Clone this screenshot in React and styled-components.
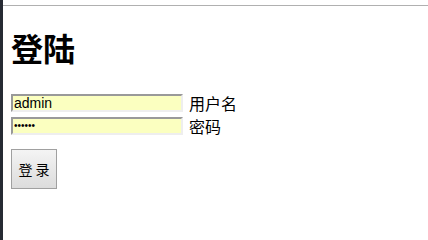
import React from 'react';
import styled, { createGlobalStyle } from 'styled-components';

const Global = createGlobalStyle`
    html, body {
        margin: 0;
        padding: 0;
        background: #fff;
    }
    body {
        font-family: 'Liberation Sans', 'Noto Sans CJK SC', sans-serif;
        color: #000;
    }
`

const Frame = styled.div`
    border-left: 3px solid #262a33;
    height: 100vh;
    box-sizing: border-box;
    overflow: hidden;
`

const Rule = styled.div`
    margin-top: 5px;
    border-top: 1px solid #b0b0b0;
`

const Content = styled.form`
    padding: 0 8px;
    display: flex;
    flex-direction: column;
    align-items: flex-start;
`

const Title = styled.h1`
    font-family: 'Noto Sans CJK SC', sans-serif;
    font-size: 32px;
    font-weight: bold;
    line-height: 37px;
    margin: 23px 0 25px;
`

const Row = styled.label`
    display: flex;
    align-items: center;
    gap: 6px;
    height: 23px;
    font-family: 'Noto Sans CJK SC', sans-serif;
    font-size: 16px;
`

const Field = styled.input`
    box-sizing: border-box;
    width: 172px;
    height: 18px;
    margin: 0;
    padding: 0 1px;
    background: #fbffc0;
    border: 2px solid;
    border-color: #999 #eee #eee #999;
    font-family: 'Liberation Sans', sans-serif;
    font-size: ${p => (p.type === 'password' ? '10px' : '14px')};
    color: #000;
    outline: none;
`

const Button = styled.button`
    margin-top: 12px;
    width: 46px;
    height: 40px;
    padding: 0;
    border: 1px solid #a0a0a0;
    border-radius: 0;
    background: linear-gradient(#f4f4f4, #dcdcdc);
    font-family: 'Noto Sans CJK SC', sans-serif;
    font-size: 14px;
    color: #000;
`

function App() {
    return (
        <Frame>
            <Global />
            <Rule />
            <Content onSubmit={e => e.preventDefault()}>
                <Title>登陆</Title>
                <Row>
                    <Field type="text" defaultValue="admin" />
                    用户名
                </Row>
                <Row>
                    <Field type="password" defaultValue="123456" />
                    密码
                </Row>
                <Button type="submit">登 录</Button>
            </Content>
        </Frame>
    );
}

export default App;
